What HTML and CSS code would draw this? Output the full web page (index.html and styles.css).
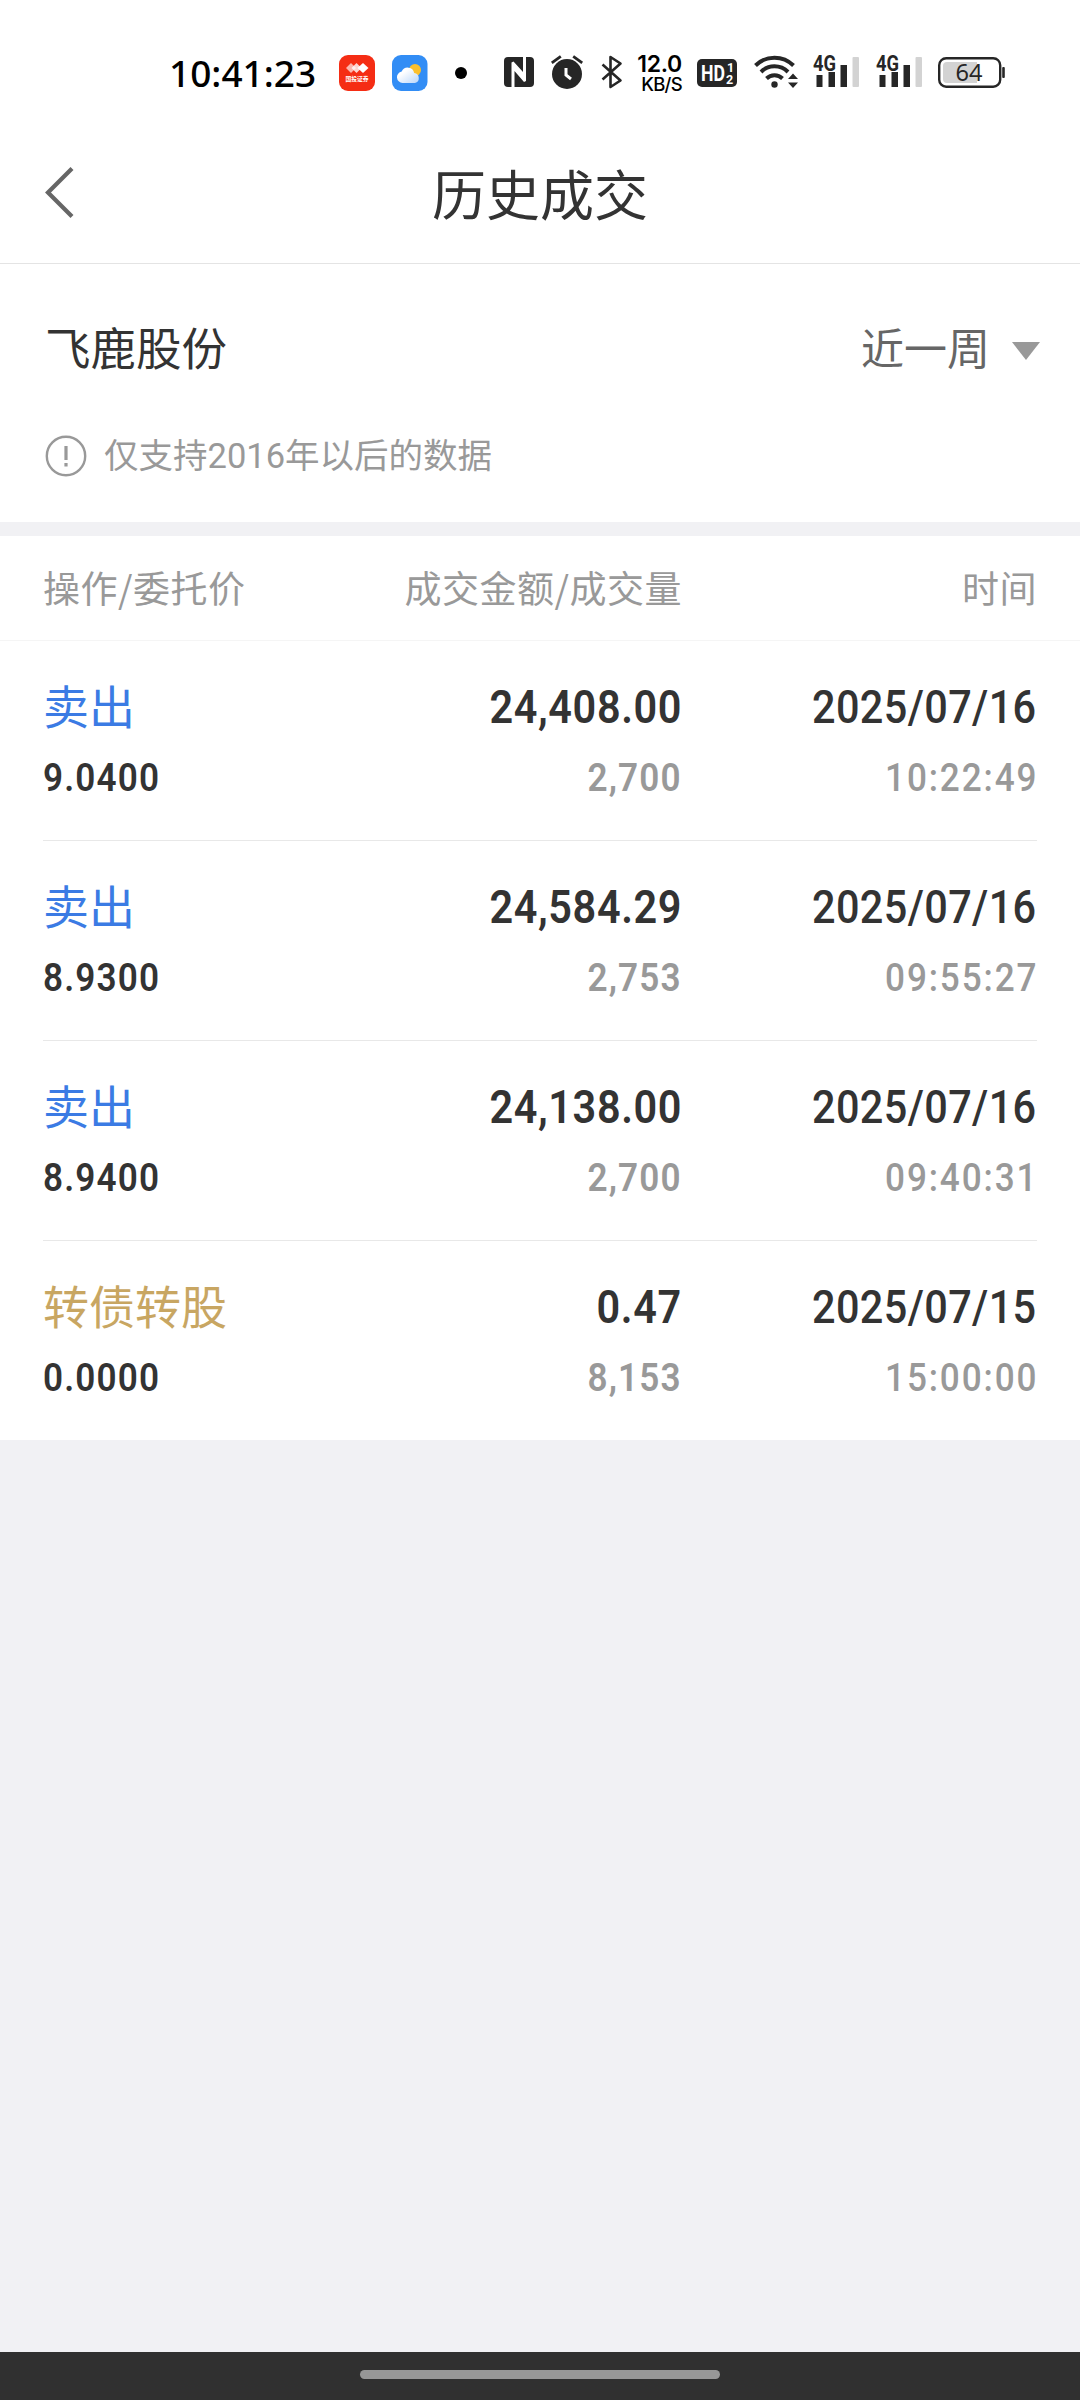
FILE: index.html
```html
<!DOCTYPE html>
<html lang="zh-CN">
<head>
<meta charset="utf-8">
<title>历史成交</title>
<link rel="stylesheet" href="styles.css">
</head>
<body>
<div class="screen">
  <div class="status">
    <span class="clock">10:41:23</span>
    <svg class="app-broker" width="36" height="40" viewBox="0 0 36 40">
      <rect y="1" width="36" height="36" rx="9" fill="#f52d14"/>
      <path d="M12 9l5 5-5 5-5-5z" fill="#fff" opacity=".65"/>
      <path d="M17.500 9l5 5-5 5-5-5z" fill="#fff" opacity=".8"/>
      <path d="M24 9l5.500 5-5.500 5-5.500-5z" fill="#fff"/>
      <text x="6.500" y="27" font-size="5.800" font-weight="700" fill="#fff" textLength="23">国投证券</text>
    </svg>
    <svg class="app-weather" width="36" height="40" viewBox="0 0 36 40">
      <defs>
        <linearGradient id="cloud" x1="0" y1="0" x2="1" y2="1"><stop offset="0.300" stop-color="#fff"/><stop offset="1" stop-color="#b9d6fa"/></linearGradient>
      </defs>
      <rect y="1" width="35.500" height="36" rx="9" fill="#328df5"/>
      <circle cx="23" cy="16" r="6" fill="#fbc02d"/>
      <path d="M10.500 29a5.800 5.800 0 0 1-.8-11.500 6.600 6.600 0 0 1 12.500 1.500A5.100 5.100 0 0 1 23 29z" fill="url(#cloud)"/>
    </svg>
    <span class="dot"></span>
    <svg class="nfc" width="30" height="40" viewBox="0 0 30 40">
      <rect y="3" width="30" height="30" rx="4" fill="#262626"/>
      <path d="M7.500 33V8.500l2-1L19 18V3h3v24l-2 1L10.500 17v16z" fill="#fff"/>
      <path d="M10.500 12.500L19 22v2.500L10.500 15z" fill="#fff"/>
    </svg>
    <svg class="alarm" width="32" height="40" viewBox="0 0 32 40">
      <circle cx="16" cy="20" r="15" fill="#262626"/>
      <path d="M.8 8.800L9.800 2.300M22.200 2.300l9 6.500" fill="none" stroke="#262626" stroke-width="2.800"/>
      <path d="M15 14v7l5 4" fill="none" stroke="#fff" stroke-width="3"/>
    </svg>
    <svg class="bluetooth" width="22" height="40" viewBox="0 0 22 40">
      <path d="M1.500 10.500L19.500 26.500 9.500 33V3l10 6.500L1.500 25.500" fill="none" stroke="#262626" stroke-width="2.600" stroke-linejoin="round"/>
    </svg>
    <div class="rate"><span class="speed">12.0</span><span class="unit">KB/S</span></div>
    <svg class="hd" width="40" height="40" viewBox="0 0 40 40">
      <rect y="5" width="40" height="28" rx="5" fill="#262626"/>
      <text x="4" y="27" font-size="22" textLength="24" lengthAdjust="spacingAndGlyphs">HD</text>
      <text x="30" y="17.500" font-size="12.500">1</text>
      <text x="29" y="30" font-size="12.500">2</text>
    </svg>
    <svg class="wifi" width="46" height="40" viewBox="0 0 46 40">
      <path d="M1.500 11.500a27 27 0 0 1 38 0" fill="none" stroke="#262626" stroke-width="4"/>
      <path d="M7 18a19 19 0 0 1 27 0M12.500 24.500a11.500 11.500 0 0 1 16 0" fill="none" stroke="#262626" stroke-width="4"/>
      <circle cx="20.500" cy="30.500" r="3.200" fill="#262626"/>
      <path d="M34 25l5-5.500 5 5.500zM34 28.500h10L39 34z" fill="#262626"/>
    </svg>
    <svg class="signal" width="47" height="40" viewBox="0 0 47 40">
      <text x="0" y="16.500" font-size="22" textLength="23" lengthAdjust="spacingAndGlyphs">4G</text>
      <path d="M3.500 21h6v12h-6zM15.500 18h6.500v15h-6.500zM27.500 11h6.500v22h-6.500z" fill="#262626"/>
      <rect x="39.500" y="3" width="6.500" height="30" rx="1" fill="#d3d3d3"/>
    </svg>
    <svg class="signal" width="47" height="40" viewBox="0 0 47 40">
      <text x="0" y="16.500" font-size="22" textLength="23" lengthAdjust="spacingAndGlyphs">4G</text>
      <path d="M3.500 21h6v12h-6zM15.500 18h6.500v15h-6.500zM27.500 11h6.500v22h-6.500z" fill="#262626"/>
      <rect x="39.500" y="3" width="6.500" height="30" rx="1" fill="#d3d3d3"/>
    </svg>
    <svg class="battery" width="68" height="40" viewBox="0 0 68 40">
      <rect x="1.200" y="4.200" width="61" height="28.500" rx="7" fill="none" stroke="#262626" stroke-width="2.400"/>
      <path d="M9 8h30v21H9a4 4 0 0 1-4-4V12a4 4 0 0 1 4-4z" fill="#d3d3d3"/>
      <rect x="64.200" y="13" width="2.600" height="11" rx="1" fill="#262626"/>
      <text x="17.500" y="27" font-size="24" textLength="27" lengthAdjust="spacingAndGlyphs">64</text>
    </svg>
  </div>

  <header class="titlebar">
    <svg class="back" width="30" height="54" viewBox="0 0 30 54"><path d="M28 2.500L4 26.500l24 24" fill="none" stroke="#666" stroke-width="4.200"/></svg>
    <h1 class="title">历史成交</h1>
  </header>

  <section class="filter">
    <div class="filter-row">
      <span class="stock">飞鹿股份</span>
      <span class="period">近一周<i class="caret"></i></span>
    </div>
    <div class="note">
      <svg width="42" height="42" viewBox="0 0 42 42"><circle cx="21" cy="21" r="19.200" fill="none" stroke="#999" stroke-width="2.400"/><path d="M21 11v14M21 28v3.500" stroke="#999" stroke-width="3.200"/></svg>
      <span>仅支持2016年以后的数据</span>
    </div>
  </section>

  <main class="trades">
    <div class="cols head"><span>操作/委托价</span><span>成交金额/成交量</span><span>时间</span></div>
    <div class="cols trade">
      <div><b class="side sell">卖出</b><span class="num small price">9.0400</span></div>
      <div><span class="num big">24,408.00</span><span class="num small">2,700</span></div>
      <div><span class="num big date">2025/07/16</span><span class="num small time">10:22:49</span></div>
    </div>
    <div class="cols trade">
      <div><b class="side sell">卖出</b><span class="num small price">8.9300</span></div>
      <div><span class="num big">24,584.29</span><span class="num small">2,753</span></div>
      <div><span class="num big date">2025/07/16</span><span class="num small time">09:55:27</span></div>
    </div>
    <div class="cols trade">
      <div><b class="side sell">卖出</b><span class="num small price">8.9400</span></div>
      <div><span class="num big">24,138.00</span><span class="num small">2,700</span></div>
      <div><span class="num big date">2025/07/16</span><span class="num small time">09:40:31</span></div>
    </div>
    <div class="cols trade">
      <div><b class="side convert">转债转股</b><span class="num small price">0.0000</span></div>
      <div><span class="num big">0.47</span><span class="num small">8,153</span></div>
      <div><span class="num big date">2025/07/15</span><span class="num small time">15:00:00</span></div>
    </div>
  </main>

  <footer class="navbar"><span class="handle"></span></footer>
</div>
</body>
</html>
```

FILE: styles.css
```css
* { box-sizing: border-box; }

body {
  margin: 0;
  background: #f1f1f4;
  color: #333;
  font-family: "Noto Sans CJK SC", sans-serif;
}

.screen {
  display: flex;
  flex-direction: column;
  width: 1080px;
  height: 2400px;
  overflow: hidden;
}

svg { display: block; flex: none; overflow: visible; }

/* system status bar */
.status {
  display: flex;
  align-items: flex-start;
  height: 120px;
  padding: 54px 0 0 169px;
  background: #fff;
  font-family: "Noto Sans", sans-serif;
  font-weight: 500;
}
.clock {
  flex: none;
  width: 170px;
  font-size: 37px;
  line-height: 37px;
  color: #000;
}
.app-broker { font-family: "Noto Sans CJK SC", sans-serif; }
.app-weather { margin-left: 17px; }
.dot {
  flex: none;
  width: 12px;
  height: 12px;
  margin: 13px 0 0 27px;
  border-radius: 50%;
  background: #000;
}
.nfc { margin-left: 37px; }
.alarm { margin-left: 17px; }
.bluetooth { margin-left: 18px; }
.rate {
  display: flex;
  flex-direction: column;
  flex: none;
  align-items: flex-end;
  width: 46px;
  margin-left: 14px;
  padding-right: 1px;
  color: #000;
  font-family: Inter, sans-serif;
  white-space: nowrap;
}
.speed { font-size: 23px; font-weight: 600; line-height: 20px; letter-spacing: -.3px; }
.unit { font-size: 18.500px; font-weight: 500; line-height: 21px; letter-spacing: -.7px; }
.hd { margin-left: 14px; fill: #fff; font-family: Roboto, sans-serif; font-weight: 700; }
.wifi { margin-left: 17px; }
.signal { margin-left: 13px; fill: #262626; font-family: Roboto, sans-serif; font-weight: 700; }
.signal + .signal { margin-left: 16px; }
.battery { margin-left: 15px; fill: #262626; font-weight: 400; }

/* title bar */
.titlebar {
  display: grid;
  grid-template-columns: 120px 1fr 120px;
  height: 144px;
  border-bottom: 1px solid #e4e4e4;
  background: #fff;
}
.back { margin: 46px 0 0 44px; }
.title {
  margin: 33px 0 0;
  font-size: 54px;
  font-weight: 400;
  line-height: 80px;
  text-align: center;
}

/* stock and period filter */
.filter {
  height: 272px;
  padding: 48px 40px 0 45px;
  border-bottom: 14px solid #f1f1f4;
  background: #fff;
}
.filter-row {
  display: flex;
  justify-content: space-between;
  align-items: center;
  height: 68px;
}
.stock { font-size: 45.500px; }
.period {
  display: flex;
  align-items: center;
  gap: 22px;
  font-size: 43px;
  color: #666;
}
.caret {
  margin-top: 9px;
  border: solid transparent;
  border-width: 18px 14px 0;
  border-top-color: #999;
}
.note {
  display: flex;
  align-items: center;
  gap: 17px;
  margin-top: 52px;
  height: 48px;
  font-family: Roboto, "Noto Sans CJK SC", sans-serif;
  font-size: 34.500px;
  line-height: 48px;
  color: #999;
}

/* trade list */
.trades { padding: 0 43px; background: #fff; }
.cols {
  display: grid;
  grid-template-columns: 300px 339px 1fr;
}
.cols > * + * { text-align: right; }
.head {
  height: 105px;
  margin: 0 -43px;
  padding: 0 43px;
  border-bottom: 1px solid #f5f5f5;
  font-size: 37px;
  letter-spacing: .5px;
  line-height: 102px;
  color: #999;
}
.trade {
  height: 200px;
  padding-top: 36px;
  border-bottom: 1px solid #e8e8e8;
}
.trade:last-child { height: 199px; border-bottom: 0; }
.trade > div { display: flex; flex-direction: column; align-items: flex-end; }
.trade > div:first-child { align-items: flex-start; }
.side {
  height: 60px;
  font-size: 46px;
  font-weight: 400;
  line-height: 54px;
}
.sell { color: #3b7be4; }
.convert { color: #c8a662; }
.num {
  font-family: Roboto, sans-serif;
  font-weight: 600;
  letter-spacing: .7px;
  transform: scaleX(.9);
  transform-origin: right;
}
.big { height: 60px; font-size: 46px; line-height: 60px; }
.small { height: 60px; font-size: 39px; line-height: 83px; letter-spacing: 1.300px; color: #999; }
.date { font-weight: 480; letter-spacing: .45px; }
.time { font-weight: 480; letter-spacing: 2.100px; transform: translateX(1px) scaleX(.9); }
.price { color: #333; transform-origin: left; }

/* gesture navigation */
.navbar {
  display: flex;
  justify-content: center;
  height: 48px;
  margin-top: auto;
  padding-top: 18px;
  background: #303030;
}
.handle {
  width: 360px;
  height: 9px;
  border-radius: 5px;
  background: #979797;
}
```
